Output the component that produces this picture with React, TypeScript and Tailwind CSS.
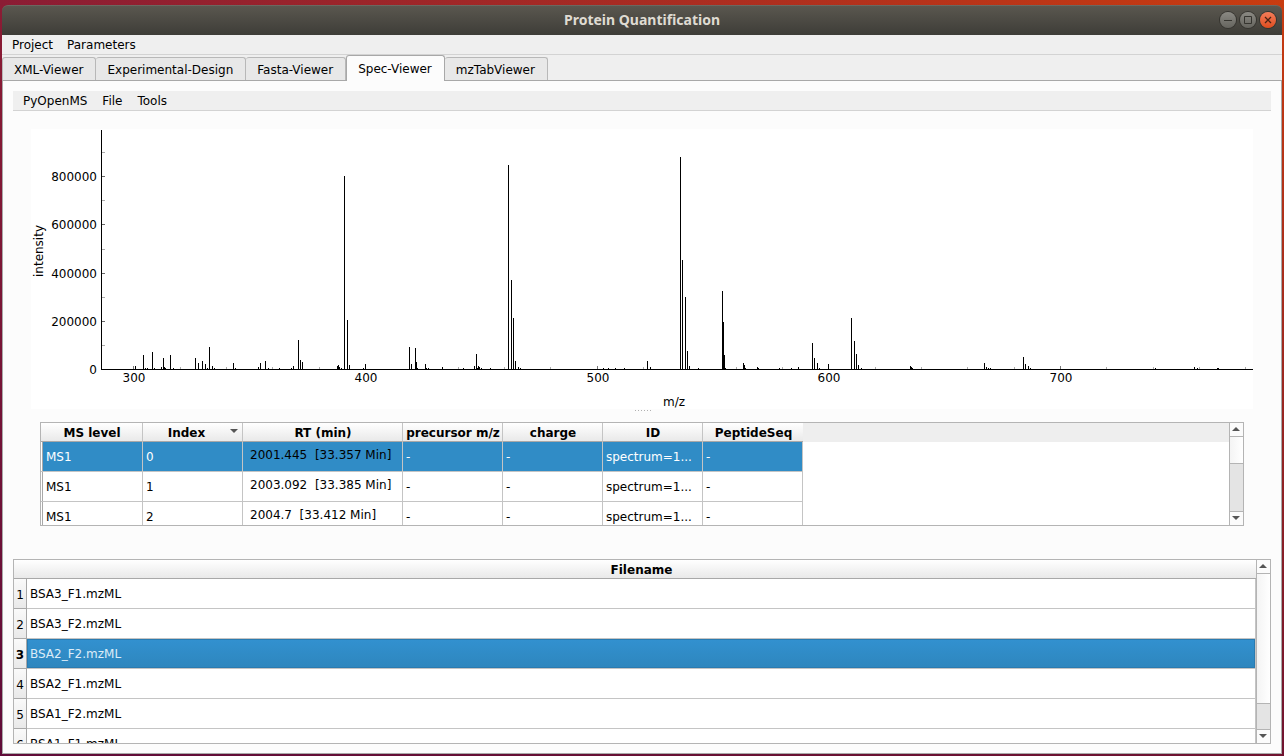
import type { ReactNode } from "react";

const peaks: [number, number][] = [
  [135, 366], [143, 355], [145, 368], [147, 368], [152, 352], [154, 368], [161, 367], [163, 358],
  [164, 367], [165, 368], [170, 355], [173, 368], [195, 358], [198, 363], [202, 361], [205, 364],
  [207, 368], [209, 347], [212, 366], [214, 368], [233, 363], [235, 368], [258, 367], [260, 363],
  [265, 361], [268, 368], [279, 368], [291, 368], [293, 366], [298, 340], [300, 360], [302, 362],
  [337, 366], [338, 365], [339, 367], [341, 368], [344, 176], [347, 320], [349, 365], [363, 368],
  [365, 364], [409, 347], [411, 364], [415, 348], [416, 362], [417, 368], [425, 364], [426, 368],
  [428, 368], [442, 367], [463, 368], [474, 366], [476, 354], [477, 368], [478, 366], [479, 367],
  [481, 368], [490, 368], [508, 165], [511, 280], [513, 318], [515, 361], [518, 367], [520, 368],
  [603, 368], [608, 368], [615, 368], [624, 368], [647, 361], [650, 367], [680, 157], [682, 260],
  [685, 297], [687, 351], [689, 366], [698, 368], [722, 291], [723, 322], [724, 355], [725, 368],
  [743, 363], [744, 365], [745, 368], [757, 367], [758, 368], [779, 368], [791, 368], [798, 367],
  [812, 343], [814, 358], [817, 363], [819, 368], [828, 364], [851, 318], [854, 341], [856, 354],
  [858, 365], [861, 368], [910, 366], [911, 367], [912, 368], [984, 363], [986, 367], [988, 368],
  [990, 368], [1023, 357], [1025, 364], [1028, 366], [1030, 368], [1155, 368], [1194, 367],
  [1197, 368], [1217, 368], [1218, 368],
];

const minorX = [180, 226, 272, 319, 458, 504, 550, 643, 736, 782, 875, 921, 967, 1014, 1106, 1153, 1199, 1245];
const majorX: [number, string][] = [[133, "300"], [365, "400"], [597, "500"], [828, "600"], [1060, "700"]];
const minorY = [152, 200, 249, 297, 345];
const majorY: [number, string][] = [[176, "800000"], [224, "600000"], [273, "400000"], [321, "200000"], [369, "0"]];

function SpectrumPlot() {
  return (
    <svg viewBox="31 129 1222 280" className="block w-full bg-white text-[12px]" role="img" aria-label="Mass spectrum">
      <g shapeRendering="crispEdges">
        {minorX.map((x) => <rect key={x} x={x} y={367} width={1} height={2} fill="#aaaaaa" />)}
        {majorX.map(([x]) => <rect key={x} x={x} y={366} width={1} height={3} fill="#777777" />)}
        {minorY.map((y) => <rect key={y} x={102} y={y} width={3} height={1} fill="#aaaaaa" />)}
        {majorY.map(([y]) => <rect key={y} x={102} y={y} width={3} height={1} fill="#666666" />)}
        {peaks.map(([x, top]) => <rect key={x} x={x} y={top} width={1} height={369 - top} fill="#000" />)}
        <rect x={101} y={130} width={1} height={240} fill="#000" />
        <rect x={101} y={369} width={1152} height={1} fill="#000" />
      </g>
      {majorX.map(([x, t]) => <text key={t} x={x + 1} y={382} textAnchor="middle">{t}</text>)}
      {majorY.map(([y, t]) => <text key={t} x={97} y={y + 5} textAnchor="end">{t}</text>)}
      <text x={674} y={406} textAnchor="middle">m/z</text>
      <text transform="translate(43 251) rotate(-90)" textAnchor="middle">intensity</text>
    </svg>
  );
}

function MenuButton({ children }: { children: ReactNode }) {
  return <button className="leading-4">{children}</button>;
}

function Tab({ children, selected }: { children: ReactNode; selected?: boolean }) {
  return (
    <button
      role="tab"
      aria-selected={!!selected}
      className={
        selected
          ? "relative -mb-px h-[26px] rounded-t-[3px] border border-b-0 border-[#a8a8a8] bg-[#fcfcfc] pr-3 pl-[11px]"
          : "h-[23px] rounded-t-[3px] border border-b-0 border-l-0 border-[#b8b8b8] bg-[#e8e8e8] pt-px pr-3 pl-[11px] first:border-l"
      }
    >
      {children}
    </button>
  );
}

function Arrow({ down }: { down?: boolean }) {
  return (
    <svg width="8" height="4" viewBox="0 0 8 4" aria-hidden="true">
      <path d={down ? "M0 0H8L4 4Z" : "M0 4H8L4 0Z"} fill="#555" />
    </svg>
  );
}

function ScrollBar({ thumb }: { thumb: string }) {
  return (
    <div className="flex w-[14px] shrink-0 flex-col border-l border-[#b4b4b4] bg-[#e4e4e4]">
      <button aria-label="Scroll up" className="flex h-[14px] shrink-0 items-center justify-center border-b border-[#b4b4b4] bg-[#fbfbfb] pr-px pb-px">
        <Arrow />
      </button>
      <div className="min-h-0 flex-1">
        <div className={`${thumb} border-b border-[#b4b4b4] bg-gradient-to-r from-[#f4f4f4] to-white`} />
      </div>
      <button aria-label="Scroll down" className="flex h-[14px] shrink-0 items-center justify-center border-t border-[#b4b4b4] bg-[#fbfbfb] pr-px pb-px">
        <Arrow down />
      </button>
    </div>
  );
}

const columns = ["MS level", "Index", "RT (min)", "precursor m/z", "charge", "ID", "PeptideSeq"];
const spectra = [
  ["MS1", "0", "2001.445  [33.357 Min]", "-", "-", "spectrum=1...", "-"],
  ["MS1", "1", "2003.092  [33.385 Min]", "-", "-", "spectrum=1...", "-"],
  ["MS1", "2", "2004.7  [33.412 Min]", "-", "-", "spectrum=1...", "-"],
];

function SpectrumTable() {
  return (
    <div className="flex h-[104px] border border-[#b4b4b4] bg-white">
      <div className="min-w-0 flex-1 overflow-hidden bg-[linear-gradient(#eeeeee_19px,#ffffff_19px)]">
        <table className="w-[762px] table-fixed border-separate border-spacing-0">
          <colgroup>
            <col className="w-[102px]" />
            <col className="w-[100px]" />
            <col className="w-[160px]" />
            <col className="w-[100px]" />
            <col className="w-[100px]" />
            <col className="w-[100px]" />
            <col className="w-[100px]" />
          </colgroup>
          <thead>
            <tr className="h-[19px]">
              {columns.map((c) => (
                <th
                  key={c}
                  className="border-r border-b border-[#c4c4c4] border-b-[#a8a8a8] bg-gradient-to-b from-white to-[#e9e9e9] p-0 pt-[2px] pl-px leading-4 font-bold whitespace-nowrap last:border-r-0"
                >
                  {c === "Index" ? (
                    <span className="relative block pr-[13px]">
                      {c}
                      <span className="absolute top-1 right-1 leading-none"><Arrow down /></span>
                    </span>
                  ) : c}
                </th>
              ))}
            </tr>
          </thead>
          <tbody>
            {spectra.map((row, r) => (
              <tr key={row[1]} className={r === 0 ? "h-[30px] bg-[#308cc6] text-white" : "h-[30px] bg-white"}>
                {row.map((v, i) => (
                  <td
                    key={i}
                    className={
                      i === 2
                        ? "border-r border-b border-[#c4c4c4] p-0 pb-1 pl-[7px] whitespace-pre text-black"
                        : i === 0
                          ? "border-r border-b border-[#c4c4c4] bg-white p-0 whitespace-nowrap"
                          : "border-r border-b border-[#c4c4c4] p-0 pl-[3px] whitespace-nowrap"
                    }
                  >
                    {i === 0 ? (
                      <span
                        className={
                          r === 0
                            ? "ml-px flex h-[29px] items-center border-l border-[#a8a8a8] bg-[#308cc6] pl-[3px]"
                            : "ml-px flex h-[29px] items-center border-l border-[#a8a8a8] pl-[3px]"
                        }
                      >
                        {v}
                      </span>
                    ) : v}
                  </td>
                ))}
              </tr>
            ))}
          </tbody>
        </table>
      </div>
      <ScrollBar thumb="h-[27px]" />
    </div>
  );
}

const files = ["BSA3_F1.mzML", "BSA3_F2.mzML", "BSA2_F2.mzML", "BSA2_F1.mzML", "BSA1_F2.mzML", "BSA1_F1.mzML"];

function FileTable() {
  return (
    <div className="flex min-h-0 flex-1 border border-[#b4b4b4] bg-white">
      <div className="min-w-0 flex-1 overflow-hidden">
        <table className="w-full table-fixed border-separate border-spacing-0">
          <colgroup>
            <col className="w-[13px]" />
            <col />
          </colgroup>
          <thead>
            <tr className="h-[19px]">
              <th colSpan={2} className="border-b border-[#a8a8a8] bg-gradient-to-b from-white to-[#e9e9e9] p-0 pt-[2px] pl-[13px] leading-4 font-bold">
                Filename
              </th>
            </tr>
          </thead>
          <tbody>
            {files.map((f, i) => (
              <tr key={f} className="h-[30px]">
                <th
                  scope="row"
                  className={
                    i === 2
                      ? "border-r border-b border-[#a8a8a8] bg-gradient-to-b from-[#fafafa] to-[#e9e9e9] p-0 pt-[2px] font-bold"
                      : "border-r border-b border-[#a8a8a8] bg-gradient-to-b from-[#fafafa] to-[#e9e9e9] p-0 pt-[2px] font-normal"
                  }
                >
                  {i + 1}
                </th>
                <td
                  className={
                    i === 2
                      ? "border-r border-b border-[#c4c4c4] bg-gradient-to-b from-[#3291d0] to-[#2e86bd] p-0 pl-[3px] text-[#dcecf8] inset-ring inset-ring-[#2a7bb0]"
                      : "border-r border-b border-[#c4c4c4] p-0 pl-[3px]"
                  }
                >
                  {f}
                </td>
              </tr>
            ))}
          </tbody>
        </table>
      </div>
      <ScrollBar thumb="h-[130px]" />
    </div>
  );
}

function TitleBar() {
  const plain =
    "flex size-4 items-center justify-center rounded-full bg-gradient-to-b from-[#8b8a84] to-[#65645e] ring-1 ring-[#35342f]";
  return (
    <header className="grid h-[30px] shrink-0 grid-cols-[1fr_auto_1fr] items-center rounded-t-md border-t border-[#6b6860] bg-gradient-to-b from-[#5a574f] to-[#3e3d38] px-[6px] pb-px">
      <h1 className="col-start-2 font-['Noto_Sans','Open_Sans',sans-serif] text-[14px] leading-4 font-bold text-[#dfdbd2]">
        Protein Quantification
      </h1>
      <div className="flex justify-end gap-1">
        <button aria-label="Minimize" className={plain}>
          <svg width="16" height="16" viewBox="0 0 16 16"><path d="M4 8.5H12" stroke="#35342f" /></svg>
        </button>
        <button aria-label="Maximize" className={plain}>
          <svg width="16" height="16" viewBox="0 0 16 16"><path d="M4.5 4.5H11.5V11.5H4.5Z" fill="none" stroke="#35342f" /></svg>
        </button>
        <button
          aria-label="Close"
          className="flex size-4 items-center justify-center rounded-full bg-gradient-to-b from-[#f37c58] to-[#df4c1c] ring-1 ring-[#35342f]"
        >
          <svg width="16" height="16" viewBox="0 0 16 16"><path d="M5 5L11 11M11 5L5 11" stroke="#4a2213" strokeWidth="1.3" /></svg>
        </button>
      </div>
    </header>
  );
}

export default function App() {
  return (
    <div className="flex h-screen flex-col bg-[linear-gradient(to_bottom,transparent,#52063ac0),linear-gradient(to_right,#8b1c34,#a52a24_45%,#c83c10)] px-[2px] pt-[5px] pb-[2px] font-['DejaVu_Sans',sans-serif] text-[12px] leading-4 text-black">
      <TitleBar />
      <div className="flex min-h-0 flex-1 flex-col bg-[#efefef]">
        <nav aria-label="Main menu" className="flex h-5 shrink-0 items-center gap-[14px] border-b border-[#d3d3d3] px-[10px]">
          <MenuButton>Project</MenuButton>
          <MenuButton>Parameters</MenuButton>
        </nav>
        <div role="tablist" className="flex h-[25px] shrink-0 items-end">
          <Tab>XML-Viewer</Tab>
          <Tab>Experimental-Design</Tab>
          <Tab>Fasta-Viewer</Tab>
          <Tab selected>Spec-Viewer</Tab>
          <Tab>mzTabViewer</Tab>
        </div>
        <main className="flex min-h-0 flex-1 flex-col border border-[#a8a8a8] bg-[#fcfcfc] px-[10px] pt-[10px] pb-[9px]">
          <nav aria-label="Spectrum menu" className="flex h-5 shrink-0 items-center gap-[15px] border-b border-[#d3d3d3] bg-[#efefef] px-[10px]">
            <MenuButton>PyOpenMS</MenuButton>
            <MenuButton>File</MenuButton>
            <MenuButton>Tools</MenuButton>
          </nav>
          <section className="shrink-0 px-[18px] pt-[18px]">
            <SpectrumPlot />
          </section>
          <div className="flex h-[13px] shrink-0 justify-center gap-[2px] pt-px pl-[2px]" aria-hidden="true">
            {[0, 1, 2, 3, 4, 5].map((d) => <span key={d} className="size-px bg-[#b0b0b0]" />)}
          </div>
          <section className="mb-[33px] shrink-0 px-[27px]">
            <SpectrumTable />
          </section>
          <FileTable />
        </main>
      </div>
    </div>
  );
}
